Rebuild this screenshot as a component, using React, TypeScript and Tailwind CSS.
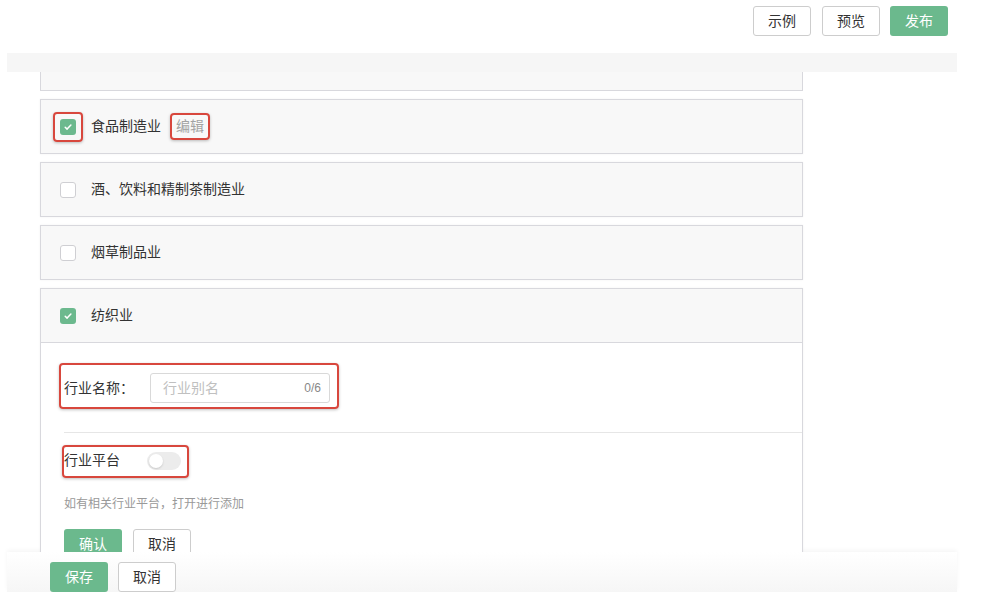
import type { ReactNode } from 'react';

const FONT = { fontFamily: '"Liberation Sans", "Noto Sans CJK SC", sans-serif' };

function Check({ checked }: { checked: boolean }) {
  if (!checked) {
    return <span className="block h-4 w-4 shrink-0 rounded-[3px] border border-[#cfcfd3] bg-white" />;
  }
  return (
    <span className="flex h-4 w-4 shrink-0 items-center justify-center rounded-[3px] bg-[#6cb98e]">
      <svg width="10" height="10" viewBox="0 0 10 10" fill="none">
        <path d="M2.2 5.2l1.9 1.9 3.8-4" stroke="white" strokeWidth="1.5" strokeLinecap="round" strokeLinejoin="round" />
      </svg>
    </span>
  );
}

// red annotation box drawn over an element
function Mark({ children, className, outer = '' }: { children: ReactNode; className: string; outer?: string }) {
  return (
    <span className={`relative inline-flex items-center ${outer}`}>
      {children}
      <span
        className={`pointer-events-none absolute rounded-[4px] border-2 border-[#d8473d] shadow-[0_1px_3px_rgba(0,0,0,0.25)] ${className}`}
      />
    </span>
  );
}

function Btn({ label, primary, className = '' }: { label: string; primary?: boolean; className?: string }) {
  return (
    <button
      className={`flex h-[30px] w-[58px] shrink-0 items-center justify-center rounded-[3px] text-[14px] ${
        primary ? 'bg-[#6bb98d] text-white' : 'border border-[#cdcdcd] bg-white text-[#333]'
      } ${className}`}
    >
      {label}
    </button>
  );
}

function Card({ label, checked, children }: { label: string; checked: boolean; children?: ReactNode }) {
  return (
    <div className="flex h-[55px] w-[763px] shrink-0 items-center border border-[#d8d8dd] bg-[#f8f8f8] pl-[19px] shadow-[0_0_2px_rgba(0,0,0,0.06)]">
      {children ?? (
        <>
          <Check checked={checked} />
          <span className="ml-[15px] text-[14px] text-[#333]">{label}</span>
        </>
      )}
    </div>
  );
}

export default function App() {
  return (
    <div className="h-[592px] w-[985px] overflow-hidden bg-white" style={FONT}>
      {/* top toolbar */}
      <div className="flex h-[53px] items-start justify-end gap-[10px] pr-[37px] pt-[6px]">
        <Btn label="示例" />
        <Btn label="预览" className="ml-px" />
        <Btn label="发布" primary />
      </div>

      <div className="ml-[7px] w-[950px]">
        <div className="h-[19px] bg-[#f6f6f6]" />

        {/* scrolling list */}
        <div className="flex h-[480px] flex-col gap-2 overflow-hidden pl-[33px]">
          <div className="h-[19px] w-[763px] shrink-0 border-x border-b border-[#d8d8dd] bg-[#f8f8f8]" />

          <Card label="食品制造业" checked>
            <Mark className="-inset-[7px]">
              <Check checked />
            </Mark>
            <span className="ml-[15px] text-[14px] text-[#333]">食品制造业</span>
            <Mark outer="ml-[15px]" className="-inset-x-[6px] -inset-y-[3px]">
              <span className="text-[14px] text-[#a3a3a3]">编辑</span>
            </Mark>
          </Card>
          <Card label="酒、饮料和精制茶制造业" checked={false} />
          <Card label="烟草制品业" checked={false} />

          {/* expanded card */}
          <div className="w-[763px] shrink-0 border-x border-t border-[#d8d8dd] shadow-[0_0_2px_rgba(0,0,0,0.06)]">
            <div className="flex h-[54px] items-center border-b border-[#d8d8dd] bg-[#f8f8f8] pl-[19px]">
              <Check checked />
              <span className="ml-[15px] text-[14px] text-[#333]">纺织业</span>
            </div>
            <div className="bg-white pl-[23px] pt-[30px]">
              <Mark className="-left-[5px] -right-[9px] -top-[10px] -bottom-[6px]">
                <span className="w-[86px] text-[14px] text-[#333]">行业名称：</span>
                <span className="flex h-[30px] w-[180px] items-center justify-between rounded-[3px] border border-[#d9d9d9] px-[12px] pr-[8px]">
                  <span className="text-[14px] text-[#c0c0c0]">行业别名</span>
                  <span className="text-[12px] text-[#888]">0/6</span>
                </span>
              </Mark>

              <div className="mt-[29px] h-px bg-[#e6e6e6]" />

              <div className="mt-[15px]">
                <Mark className="-left-[2px] -right-[8px] -top-[5px] -bottom-[7px]">
                  <span className="w-[83px] text-[14px] text-[#333]">行业平台</span>
                  <span className="relative block h-[18px] w-[34px] rounded-full bg-[#ececec]">
                    <span className="absolute left-[2px] top-[2px] h-[14px] w-[14px] rounded-full bg-white shadow-[0_1px_2px_rgba(0,0,0,0.15)]" />
                  </span>
                </Mark>
              </div>

              <div className="mt-[23px] text-[12px] text-[#999]">如有相关行业平台，打开进行添加</div>

              <div className="mt-[16px] flex gap-[11px]">
                <Btn label="确认" primary />
                <Btn label="取消" />
              </div>
            </div>
          </div>
        </div>

        {/* footer actions */}
        <div className="flex h-[40px] items-start gap-[10px] bg-gradient-to-b from-white to-[#f6f6f6] pl-[43px] pt-[10px] shadow-[0_-2px_4px_rgba(0,0,0,0.04)]">
          <Btn label="保存" primary />
          <Btn label="取消" />
        </div>
      </div>
    </div>
  );
}
